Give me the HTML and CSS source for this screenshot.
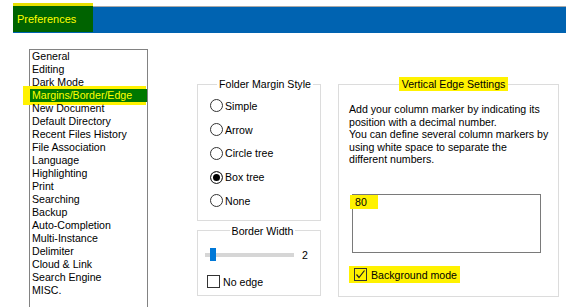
FILE: index.html
```html
<!DOCTYPE html>
<html lang="en">
<head>
  <meta charset="UTF-8" />
  <title>Preferences</title>
  <link rel="stylesheet" href="styles.css">
</head>
<body>
  <div class="titlebar">
    <div class="title-mark">Preferences</div>
  </div>
  <div class="main">
    <ul class="page-list">
      <li>General</li>
      <li>Editing</li>
      <li>Dark Mode</li>
      <li class="selected">Margins/Border/Edge</li>
      <li>New Document</li>
      <li>Default Directory</li>
      <li>Recent Files History</li>
      <li>File Association</li>
      <li>Language</li>
      <li>Highlighting</li>
      <li>Print</li>
      <li>Searching</li>
      <li>Backup</li>
      <li>Auto-Completion</li>
      <li>Multi-Instance</li>
      <li>Delimiter</li>
      <li>Cloud &amp; Link</li>
      <li>Search Engine</li>
      <li>MISC.</li>
    </ul>

    <div class="col-mid">
      <fieldset class="group folder-style">
        <legend>Folder Margin Style</legend>
        <div class="radio-row"><span class="radio"></span>Simple</div>
        <div class="radio-row"><span class="radio"></span>Arrow</div>
        <div class="radio-row"><span class="radio"></span>Circle tree</div>
        <div class="radio-row"><span class="radio checked"></span>Box tree</div>
        <div class="radio-row"><span class="radio"></span>None</div>
      </fieldset>
      <fieldset class="group border-width">
        <legend>Border Width</legend>
        <div class="slider-row">
          <div class="slider"><span class="thumb"></span></div>
          <span class="slider-value">2</span>
        </div>
        <div class="check-row"><span class="checkbox"></span>No edge</div>
      </fieldset>
    </div>

    <fieldset class="group edge-settings">
      <legend class="marked">Vertical Edge Settings</legend>
      <p class="edge-help">Add your column marker by indicating its<br>position with a decimal number.<br>You can define several column markers by<br>using white space to separate the<br>different numbers.</p>
      <div class="edge-box"><span class="marked-value">80</span></div>
      <div class="check-row bg-mode">
        <span class="checkbox">
          <svg width="11" height="11" viewBox="0 0 11 11"><polyline points="1.5,5.5 4,8.5 9.5,1.5" fill="none" stroke="#222" stroke-width="1.2"/></svg>
        </span>Background mode
      </div>
    </fieldset>
  </div>
</body>
</html>
```

FILE: styles.css
```css
body {
  margin: 0;
  background: #fff;
  color: #000;
  font-family: 'Liberation Sans', Arial, sans-serif;
  font-size: 10.6px;
  overflow: hidden;
}
.titlebar {
  margin: 6px 0 0 13px;
  border-top: 1px solid #a9a9a9;
  height: 26px;
  background: #0063b1;
}
.title-mark {
  width: 76px;
  height: 26px;
  margin-top: -1px;
  padding-left: 4px;
  background: #006300;
  color: #ffff00;
  font-size: 11px;
  line-height: 26px;
  box-shadow: 0 -3px 0 #e8e000;
}
.main {
  display: flex;
  align-items: flex-start;
  padding-left: 29px;
  margin-top: 16px;
}
.page-list {
  list-style: none;
  margin: 0;
  padding: 0;
  width: 117px;
  height: 270px;
  border: 1px solid #828282;
}
.page-list li {
  line-height: 13px;
  padding-left: 2px;
  white-space: nowrap;
}
.page-list li.selected {
  background: #007800;
  color: #ffff00;
  box-shadow: -4px 0 0 3px #fff200;
}
.col-mid {
  display: flex;
  flex-direction: column;
  width: 124px;
  margin: 28px 0 0 49px;
}
.group {
  margin: 0;
  border: 1px solid #dcdcdc;
  min-width: 0;
}
.group legend {
  margin: 0 auto;
  padding: 0 2px;
  line-height: 14px;
}
.folder-style {
  padding: 3px 0 7px 12px;
}
.radio-row {
  display: flex;
  align-items: center;
  gap: 2px;
  height: 23.75px;
}
.radio {
  width: 11px;
  height: 11px;
  border: 1px solid #333;
  border-radius: 50%;
}
.radio.checked {
  background: #000;
  box-shadow: inset 0 0 0 2px #fff;
}
.border-width {
  margin-top: 3px;
  padding: 7px 0 5px 7px;
}
.slider-row {
  display: flex;
  align-items: center;
  height: 20px;
}
.slider {
  display: flex;
  align-items: center;
  width: 89px;
  height: 20px;
  background: linear-gradient(#d6d6d6, #d6d6d6) 0 8px / 100% 4px no-repeat;
}
.thumb {
  width: 6px;
  height: 13px;
  margin-left: 5px;
  background: #0078d7;
}
.slider-value {
  margin-left: 8px;
}
.check-row {
  display: flex;
  align-items: center;
  gap: 3px;
  height: 16px;
  margin-top: 9px;
  padding-left: 2px;
}
.checkbox {
  display: flex;
  align-items: center;
  justify-content: center;
  width: 11px;
  height: 11px;
  border: 1px solid #333;
}
.edge-settings {
  width: 221px;
  box-sizing: border-box;
  margin: 28px 0 0 17px;
  padding: 12px 0 13px 10px;
}
.marked {
  background: #fff200;
}
.edge-settings legend.marked {
  padding: 0 3px;
}
.edge-help {
  margin: 0;
  line-height: 12.5px;
}
.edge-box {
  width: 186px;
  height: 57px;
  margin: 28.5px 0 0 3px;
  border: 1px solid #7a7a7a;
  padding-left: 1px;
}
.marked-value {
  display: inline-block;
  margin-left: -4px;
  padding: 0 5px;
  width: 18px;
  line-height: 14px;
  background: #fff200;
}
.bg-mode {
  display: inline-flex;
  gap: 4px;
  height: 17px;
  margin-top: 13px;
  padding: 0 3px 0 5px;
  background: #fff200;
}
```
